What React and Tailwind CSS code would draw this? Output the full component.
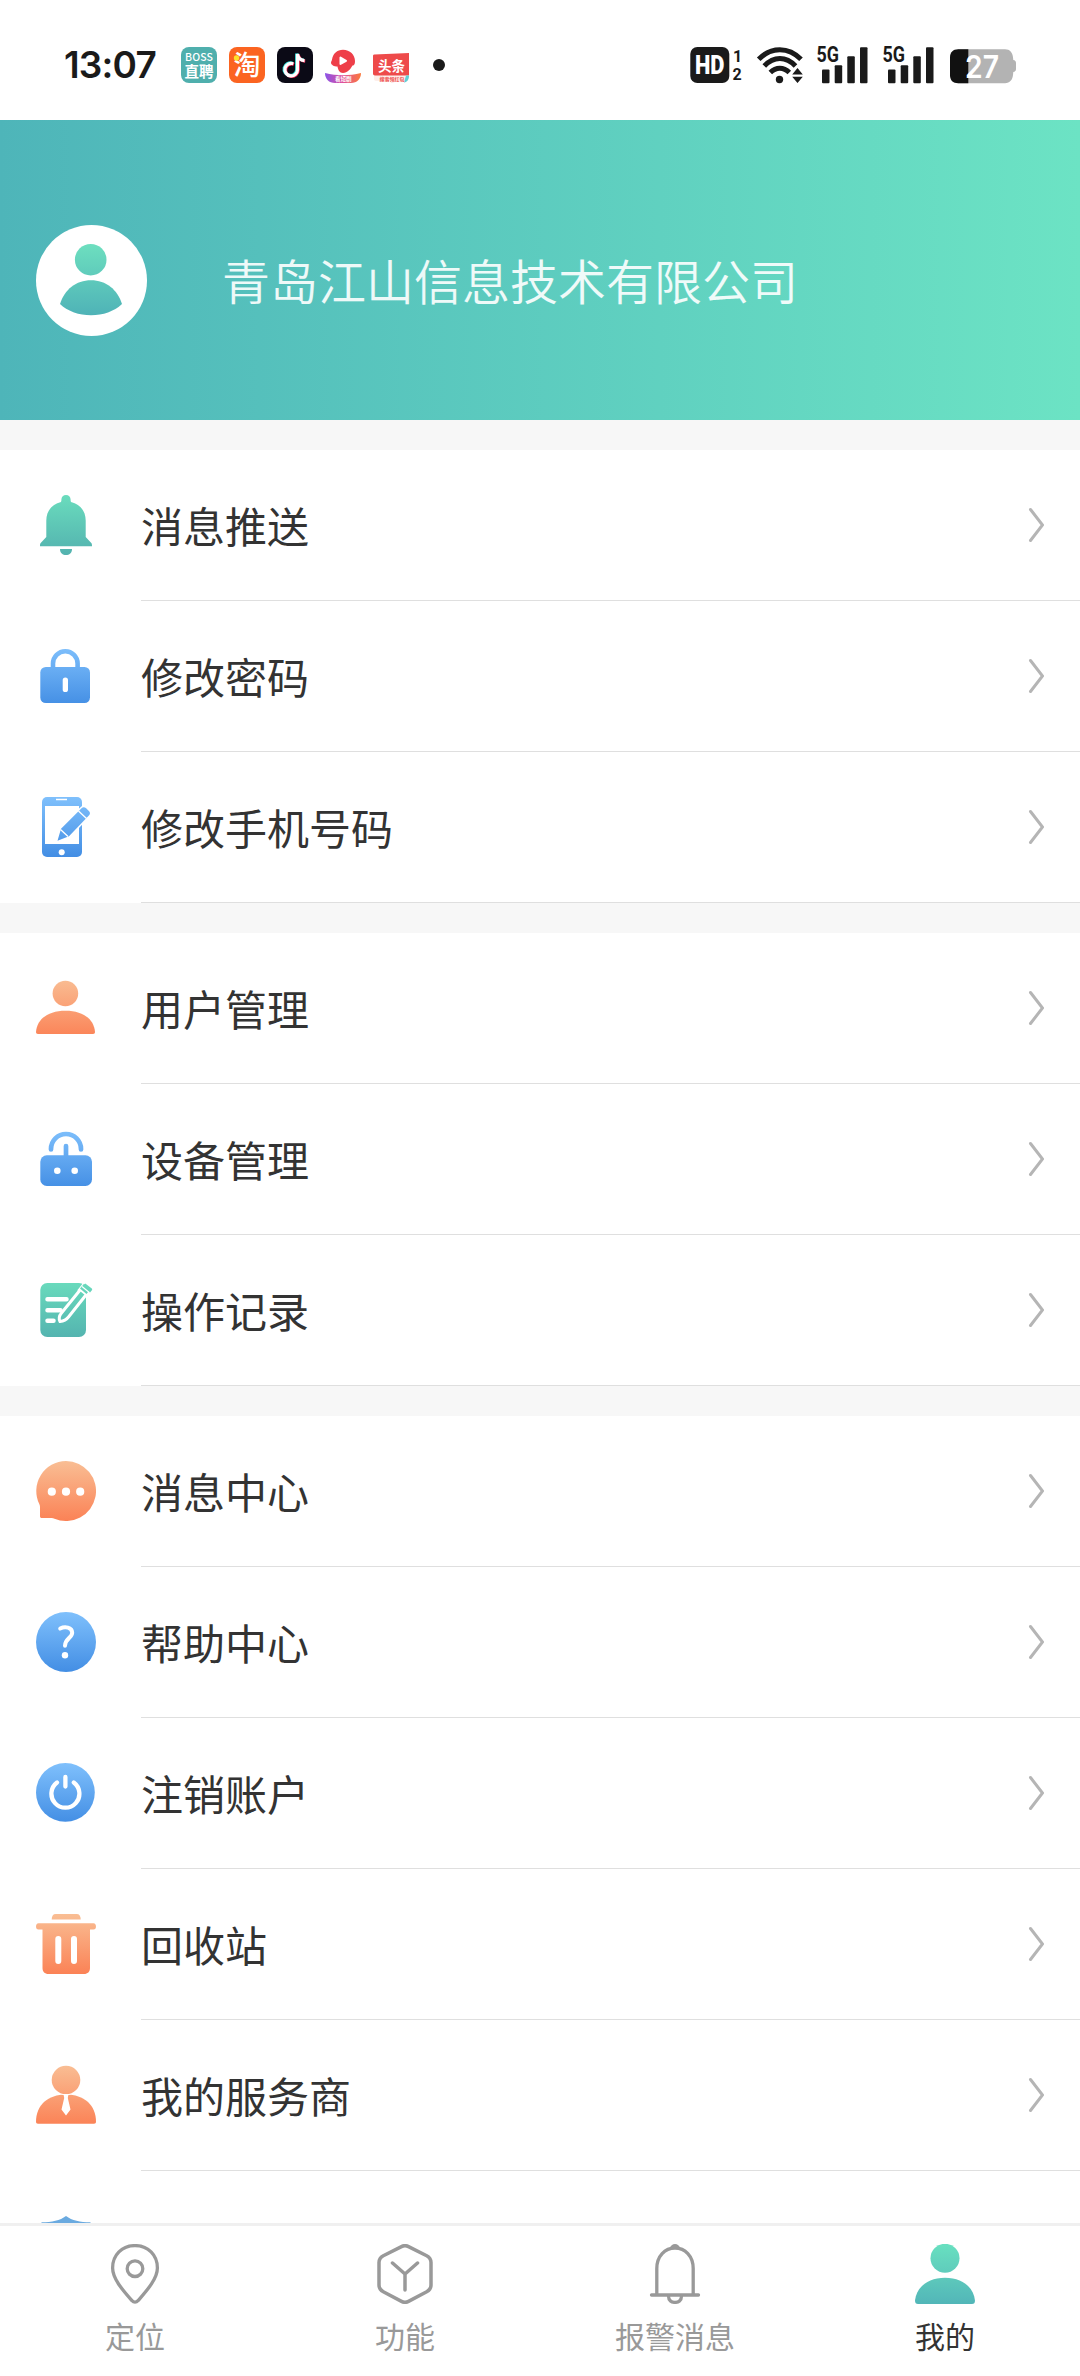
// App.jsx
import React from 'react';

// Shared vertical gradients for the filled icons
const GradientDefs = () => (
  <svg className="absolute h-0 w-0" aria-hidden="true">
    <defs>
      <linearGradient id="green" gradientUnits="userSpaceOnUse" x1="0" y1="0" x2="0" y2="60">
        <stop offset="0" stopColor="#6adcbd" />
        <stop offset="1" stopColor="#53b2af" />
      </linearGradient>
      <linearGradient id="blue" gradientUnits="userSpaceOnUse" x1="0" y1="0" x2="0" y2="60">
        <stop offset="0" stopColor="#7fc0fc" />
        <stop offset="1" stopColor="#438ee4" />
      </linearGradient>
      <linearGradient id="orange" gradientUnits="userSpaceOnUse" x1="0" y1="0" x2="0" y2="60">
        <stop offset="0" stopColor="#f9be94" />
        <stop offset="1" stopColor="#fb8256" />
      </linearGradient>
      <linearGradient id="teal" gradientUnits="userSpaceOnUse" x1="0" y1="0" x2="0" y2="60">
        <stop offset="0" stopColor="#68e0c0" />
        <stop offset="0.45" stopColor="#60cdbc" />
        <stop offset="1" stopColor="#52b6b8" />
      </linearGradient>
      <linearGradient id="avatar" gradientUnits="userSpaceOnUse" x1="0" y1="19" x2="0" y2="90">
        <stop offset="0" stopColor="#6ddfbf" />
        <stop offset="1" stopColor="#4fb3b7" />
      </linearGradient>
      <linearGradient id="app-ribbon" x1="0" y1="0" x2="1" y2="0">
        <stop offset="0" stopColor="#8a55e8" />
        <stop offset="0.5" stopColor="#e0509a" />
        <stop offset="1" stopColor="#fb7a3c" />
      </linearGradient>
    </defs>
  </svg>
);

const Icon = ({ children }) => (
  <svg viewBox="0 0 60 60" className="h-[60px] w-[60px] shrink-0" fill="none">
    {children}
  </svg>
);

const BellIcon = () => (
  <Icon>
    <path
      fill="url(#green)"
      d="M30 0c2.700 0 4.600 2 4.600 4.500 0 1 0 1.800.4 2.400C44 9 49.700 16 49.700 25.500V42l5.600 6c.6.700.7 1.500.7 3.300H4c0-1.800.1-2.600.7-3.300l5.600-6V25.500C10.300 16 16 9 25 6.900c.4-.6.400-1.400.4-2.400C25.400 2 27.300 0 30 0Z"
    />
    <path fill="url(#green)" d="M24 54h12c0 4-2.700 6-6 6s-6-2-6-6Z" />
  </Icon>
);

const LockIcon = () => (
  <Icon>
    <path stroke="url(#blue)" strokeWidth="4.600" d="M17 24v-6.500a12.300 12.300 0 0 1 24.600 0V24" />
    <rect x="4.300" y="21" width="49.700" height="36" rx="5.500" fill="url(#blue)" />
    <rect x="26.700" y="31.500" width="5.300" height="14.500" rx="2.600" fill="#fff" />
  </Icon>
);

const PhoneIcon = () => (
  <Icon>
    <rect x="6" y="0" width="40" height="60" rx="5" fill="url(#blue)" />
    <rect x="9" y="9" width="34" height="38" fill="#fff" />
    <path stroke="#fff" strokeWidth="1.500" d="M20 2.500h11" />
    <circle cx="25.700" cy="55.300" r="3" fill="#fff" />
    <path
      fill="url(#blue)"
      stroke="#fff"
      strokeWidth="3"
      paintOrder="stroke"
      d="M45.500 11.200c1.300-1.400 3-1.400 4.400-.1l3 2.800c1.400 1.300 1.400 3 .2 4.400L33 39.300l-11.500 4.500 3.500-12Z"
    />
    <path stroke="#fff" strokeWidth="1.300" d="m42.500 14 8 7.500M24.500 32.500l7.500 7" />
  </Icon>
);

const UserIcon = () => (
  <Icon>
    <circle cx="29.400" cy="15.500" r="12.800" fill="url(#orange)" />
    <path fill="url(#orange)" d="M2 56c-1.300 0-2-.7-2-2C1 41 12 32.700 29.500 32.700S58 41 59 54c0 1.300-.7 2-2 2Z" />
  </Icon>
);

const DeviceIcon = () => (
  <Icon>
    <path
      stroke="url(#blue)"
      strokeWidth="4.700"
      strokeLinecap="round"
      d="M15 20.500v-.5a15 15 0 0 1 30 0v.5M30 17v12"
    />
    <rect x="4.300" y="26.300" width="51.700" height="30.700" rx="6.500" fill="url(#blue)" />
    <circle cx="21.300" cy="41.700" r="3.300" fill="#fff" />
    <circle cx="38.700" cy="41.700" r="3.300" fill="#fff" />
  </Icon>
);

const RecordIcon = () => (
  <Icon>
    <rect x="4.300" y="3" width="45.700" height="54" rx="7" fill="url(#green)" />
    <path stroke="#fff" strokeWidth="4.500" strokeLinecap="round" d="M11.500 19.300h19M11.500 30.300h13M11.500 40.700h6" />
    <path stroke="#fff" strokeWidth="12" d="m46 14 8-10" />
    <path
      fill="url(#green)"
      stroke="#fff"
      strokeWidth="3"
      strokeLinejoin="round"
      d="M25.500 33 44.500 9.500l6 4.800L32.500 37c-2 2.500-4.500 4-8.500 4.500-1.500-3-.6-6 1.500-8.500Z"
    />
    <path fill="url(#green)" d="M44 8.500 48 3.700l6.500 5.200-4 5Z" />
    <path fill="url(#green)" d="m48.500 4.500.8-1 6.200 4.700c.9.800.8 1.500.2 2.300l-1.700 2.100-6.500-5.200Z" />
    <path stroke="#fff" strokeWidth="1.200" d="m46 6.500 7 5.700" />
  </Icon>
);

const MessageIcon = () => (
  <Icon>
    <path
      fill="url(#orange)"
      d="M30 0a30 30 0 1 1-11.500 57.700c-1-.5-1.800-.7-2.800-.7H6c-1.500 0-2-.6-2-2V46c0-1-.2-1.900-.7-2.900A30 30 0 0 1 30 0Z"
    />
    <circle cx="15.800" cy="30.700" r="4.100" fill="#fff" />
    <circle cx="30" cy="30.700" r="4.100" fill="#fff" />
    <circle cx="44.200" cy="30.700" r="4.100" fill="#fff" />
  </Icon>
);

const HelpIcon = () => (
  <Icon>
    <circle cx="30" cy="30" r="30" fill="url(#blue)" />
    <path
      stroke="#fff"
      strokeWidth="4"
      strokeLinecap="round"
      d="M24.200 16.500c4.500-2.300 12-1.500 12 4.200 0 5-7.200 6-7.200 13"
    />
    <circle cx="29" cy="43.300" r="3.200" fill="#fff" />
  </Icon>
);

const PowerIcon = () => (
  <Icon>
    <circle cx="29.400" cy="29.400" r="29.400" fill="url(#blue)" />
    <path
      stroke="#fff"
      strokeWidth="4.300"
      strokeLinecap="round"
      d="M21 19.500a14 14 0 1 0 16.800 0M29.400 14v9.500"
    />
  </Icon>
);

const TrashIcon = () => (
  <Icon>
    <path fill="url(#orange)" d="M15.700 5.600c0-3.600 1.300-5.600 4-5.600h21c2.700 0 4 2 4 5.600Z" />
    <path
      fill="url(#orange)"
      d="M2.500 9.300h55c3.300 0 3.300 6.200 0 6.200H54V54c0 3.700-2.300 6-6 6H12.500c-3.700 0-6-2.300-6-6V15.500h-4c-3.300 0-3.300-6.200 0-6.200Z"
    />
    <path stroke="#fff" strokeWidth="6" strokeLinecap="round" d="M22.300 25v22M38 25v22" />
  </Icon>
);

const ProviderIcon = () => (
  <Icon>
    <path fill="url(#orange)" d="M2 58.700c-1.300 0-2-.7-2-2C0 40 12 29.500 30 29.500S60 40 60 56.700c0 1.300-.7 2-2 2Z" />
    <circle cx="30" cy="15" r="15.300" fill="#fff" />
    <circle cx="30" cy="15" r="14.300" fill="url(#orange)" />
    <path fill="#fff" d="M27.500 29h5l-.7 4 2.700 11.500-4.500 6-4.500-6L28.200 33Z" />
  </Icon>
);

const ShieldIcon = () => (
  <Icon>
    <path
      fill="#6aaae0"
      d="M30 0c6 4.500 14 6.300 24.500 6.300V30c0 15-9 24-24.500 30C14.500 54 5.500 45 5.500 30V6.300C16 6.300 24 4.500 30 0Z"
    />
  </Icon>
);

const PinTabIcon = () => (
  <Icon>
    <g stroke="#999" strokeWidth="3.300" strokeLinejoin="round">
      <path d="M30 1.600c13 0 22.400 9.400 22.400 22.400 0 11-11 23-19.400 32.700-1.800 2-4.200 2-6 0C18.500 47 7.600 35 7.600 24 7.600 11 17 1.600 30 1.600Z" />
      <circle cx="30" cy="24.700" r="7.800" />
    </g>
  </Icon>
);

const FunctionTabIcon = () => (
  <Icon>
    <g stroke="#999" strokeWidth="3.500" strokeLinecap="round" strokeLinejoin="round">
      <path d="M26.500 2.600c2.300-1.200 4.700-1.200 7 0l18.200 9.100c3 1.600 4.300 3.700 4.300 6.800v22.500c0 3.100-1.300 5.200-4.300 6.800L33.500 57.400c-2.300 1.200-4.700 1.200-7 0L8.300 47.800C5.300 46.200 4 44.100 4 41V18.500c0-3.100 1.300-5.200 4.300-6.800Z" />
      <path d="M17.500 19 30 30l12.500-11M30 30v16" />
    </g>
  </Icon>
);

const BellTabIcon = () => (
  <Icon>
    <g stroke="#999" strokeWidth="3.300" strokeLinecap="round">
      <path d="M11.800 51V24.500C11.800 12 20 4 30 4s18.200 8 18.200 20.500V51M6.500 51h47" />
      <path d="M23.500 52c0 4.500 3 6.400 6.500 6.400s6.500-1.900 6.500-6.400" />
    </g>
    <path fill="#999" d="M24.500 5c1-3.500 3-5 5.500-5s4.500 1.500 5.500 5Z" />
  </Icon>
);

const MineTabIcon = () => (
  <Icon>
    <circle cx="30" cy="14.300" r="14.500" fill="url(#teal)" />
    <path fill="url(#teal)" d="M3 60c-2 0-3-1-3-3.500C1.500 43 13 33.700 30 33.700S58.500 43 60 56.500c0 2.500-1 3.500-3 3.500Z" />
  </Icon>
);

const menuGroups = [
  [
    { label: '消息推送', icon: BellIcon },
    { label: '修改密码', icon: LockIcon },
    { label: '修改手机号码', icon: PhoneIcon },
  ],
  [
    { label: '用户管理', icon: UserIcon },
    { label: '设备管理', icon: DeviceIcon },
    { label: '操作记录', icon: RecordIcon },
  ],
  [
    { label: '消息中心', icon: MessageIcon },
    { label: '帮助中心', icon: HelpIcon },
    { label: '注销账户', icon: PowerIcon },
    { label: '回收站', icon: TrashIcon },
    { label: '我的服务商', icon: ProviderIcon },
    { label: '', icon: ShieldIcon },
  ],
];

const tabs = [
  { label: '定位', icon: PinTabIcon },
  { label: '功能', icon: FunctionTabIcon },
  { label: '报警消息', icon: BellTabIcon },
  { label: '我的', icon: MineTabIcon, active: true },
];

const SignalIcon = () => (
  <svg viewBox="0 0 52 38" className="h-[38px] w-[52px] overflow-visible" fill="#1a1a1a">
    <text x="0.500" y="15.800" fontSize="22" fontWeight="700" fontFamily="Roboto, sans-serif" textLength="22.500" lengthAdjust="spacingAndGlyphs">
      5G
    </text>
    <rect x="6" y="23.500" width="7.500" height="13.700" rx="1" />
    <rect x="18.700" y="19.300" width="7.500" height="17.900" rx="1" />
    <rect x="31.300" y="10.300" width="7.500" height="26.900" rx="1" />
    <rect x="44" y="1.300" width="7.500" height="35.900" rx="1" />
  </svg>
);

const StatusBar = () => (
  <div className="flex h-[120px] shrink-0 items-center justify-between bg-white pt-[10px] pr-[64px] pl-[64px]">
    <div className="flex items-center">
      <span className="w-[117px] font-['Inter'] text-[37px] leading-[48px] font-semibold tracking-[-0.8px] text-[#1a1a1a]">13:07</span>
      <div className="flex items-center gap-3">
        <svg viewBox="0 0 36 36" className="h-9 w-9 overflow-visible">
          <rect width="36" height="36" rx="8" fill="#4fafad" />
          <g fill="#fff" fontFamily="Noto Sans CJK SC, sans-serif" fontWeight="700">
            <text x="4" y="14" fontSize="10.500" fontWeight="500" textLength="28">BOSS</text>
            <text x="3.500" y="29.500" fontSize="14.500">直聘</text>
          </g>
        </svg>
        <svg viewBox="0 0 36 36" className="h-9 w-9 overflow-visible">
          <rect width="36" height="36" rx="8" fill="#fb6421" />
          <text x="4.500" y="28" fontSize="27" fontWeight="500" fill="#fff" fontFamily="Noto Sans CJK SC, sans-serif">淘</text>
          <circle cx="7.500" cy="11" r="2.700" fill="#fde02a" />
        </svg>
        <svg viewBox="0 0 36 36" className="h-9 w-9">
          <rect width="36" height="36" rx="8" fill="#0b0a16" />
          <g fill="none" strokeWidth="3.200">
            <path stroke="#35e0dc" d="M15.500 16.200a6.300 6.300 0 1 0 4.200 6V6.500c.5 3.800 3 6.300 7 6.600" />
            <path stroke="#fb2c5a" d="M17 17.200a6.300 6.300 0 1 0 4.200 6V7.500c.5 3.800 3 6.300 7 6.600" />
            <path stroke="#fff" d="M16.300 16.700a6.300 6.300 0 1 0 4.200 6V7c.5 3.800 3 6.300 7 6.600" />
          </g>
        </svg>
        <svg viewBox="0 0 36 36" className="h-9 w-9 overflow-visible">
          <path fill="#ee3f49" d="M18 2.700c7 0 12 5 12 11.300 0 3-.8 4.700-2.500 4.500-2 3.500-5 7.500-9.500 7.500-3.500 0-5-3.500-5.500-6.500-3.500 0-6.500-1.500-6.500-4 0-1.300 1-1.800 1-3C8 6.500 12 2.700 18 2.700Z" />
          <path fill="#fff" stroke="#fff" strokeWidth="2" strokeLinejoin="round" d="M15.500 10.500v6.500l5.500-3.200Z" />
          <path fill="url(#app-ribbon)" d="M0 26c12 3 24 3 36 0 0 6-4 10-10 10H10C4 36 0 32 0 26Z" />
          <text x="10" y="34" fontSize="5.500" fontWeight="700" fill="#fff" fontFamily="Noto Sans CJK SC, sans-serif">看短剧</text>
        </svg>
        <svg viewBox="0 0 36 36" className="h-9 w-9 overflow-visible">
          <path fill="#fdeeea" d="M1 28h34v6H3c-1 0-2-1-2-2Z" />
          <path fill="#ee4a4a" d="M0 9c0-1 .5-1.500 1.500-1.500L36 6v22.500H2c-1.300 0-2-.7-2-2Z" />
          <path fill="#5fd0d6" d="M36 28.500c0 4-1.500 6.500-5 7l2-7Z" />
          <text x="5" y="24" fontSize="13.500" fontWeight="700" fill="#fff" fontFamily="Noto Sans CJK SC, sans-serif">头条</text>
          <text x="6.500" y="34.200" fontSize="5" fontWeight="700" fill="#ee4a4a" fontFamily="Noto Sans CJK SC, sans-serif">搜索领红包</text>
        </svg>
      </div>
      <span className="ml-6 h-3 w-3 rounded-full bg-[#1a1a1a]" />
    </div>
    <div className="flex items-center">
      <svg viewBox="0 0 52 38" className="h-[38px] w-[52px] overflow-visible" fill="#1a1a1a">
        <rect x="0.300" y="1" width="39" height="36" rx="7" />
        <text x="5" y="28" fontSize="25" fontWeight="900" fill="#fff" fontFamily="Roboto, sans-serif" textLength="29.500" lengthAdjust="spacingAndGlyphs">HD</text>
        <text x="43" y="15.800" fontSize="16" fontWeight="700" fontFamily="Roboto, sans-serif">1</text>
        <text x="42.500" y="34" fontSize="16" fontWeight="700" fontFamily="Roboto, sans-serif">2</text>
      </svg>
      <svg viewBox="0 0 46 38" className="ml-[15px] h-[38px] w-[46px] overflow-visible" fill="none" stroke="#1a1a1a" strokeWidth="5">
        <path d="M1.700 13.300c12.500-12.800 29.800-12.800 42.300 0M7.300 20c9.500-10 21.700-10 31.200 0M13.300 26.600c5.800-5.800 13.200-5.800 19 0" />
        <circle cx="22.500" cy="33.500" r="3.700" fill="#1a1a1a" stroke="none" />
        <path stroke="#fff" strokeWidth="2" fill="#1a1a1a" paintOrder="stroke" d="m40.500 22 5.300 6.500H35.200ZM40.500 37l5.300-6.300H35.200Z" />
      </svg>
      <div className="ml-[13px] flex gap-[14px]">
        <SignalIcon />
        <SignalIcon />
      </div>
      <svg viewBox="0 0 66 38" className="ml-4 h-[38px] w-[66px] overflow-visible">
        <path fill="#b3b3b3" d="M8 3.200h47c5 0 7.500 3.300 8 8l.3 2.800c1.700.2 2.700 1.200 2.700 3v6c0 1.800-1 2.800-2.700 3l-.3 3c-.5 4.700-3 8.200-8 8.200H8Z" />
        <path fill="#111" d="M18.300 3.200H8c-5 0-8 3-8 8v18c0 5 3 8 8 8h10.300Z" />
        <text x="15" y="31.500" fontSize="31" fontWeight="600" fill="#fff" fontFamily="Inter, sans-serif" textLength="34" lengthAdjust="spacingAndGlyphs">27</text>
      </svg>
    </div>
  </div>
);

const ProfileHeader = () => (
  <div className="flex h-[300px] shrink-0 items-center bg-linear-to-r from-[#4eb5b9] to-[#6ce3c4] pt-[21px] pl-9">
    <svg viewBox="0 0 111 111" className="h-[111px] w-[111px] shrink-0">
      <circle cx="55.500" cy="55.500" r="55.500" fill="#fff" />
      <circle cx="54.700" cy="34.700" r="15.800" fill="url(#avatar)" />
      <path fill="url(#avatar)" d="M24 79c4.500-14.500 16-23.800 31-23.800S81.500 64.500 86 79c-8 7.500-19 11.300-31 11.300S32 86.500 24 79Z" />
    </svg>
    <h1 className="mb-[3px] ml-[75px] text-[48px] leading-[60px] font-[350] text-white/90">青岛江山信息技术有限公司</h1>
  </div>
);

const MenuRow = ({ item }) => {
  const RowIcon = item.icon;
  return (
    <div className="flex shrink-0 bg-white pl-9">
      <div className="flex h-[150px] w-[105px] items-center">
        <RowIcon />
      </div>
      <div className="flex h-[151px] flex-1 items-center justify-between border-b border-[#dfdfdf] pr-9">
        <span className="text-[42px] leading-[60px] text-[#333]">{item.label}</span>
        <svg viewBox="0 0 16 36" className="h-9 w-4" fill="none" stroke="#b5b5b5" strokeWidth="3" strokeLinecap="round">
          <path d="m2.500 2.500 12 15.500-12 15.500" />
        </svg>
      </div>
    </div>
  );
};

const TabBar = () => (
  <nav className="grid h-[153px] shrink-0 grid-cols-4 border-t-[3px] border-[#f0f0f0] bg-white">
    {tabs.map((tab) => {
      const TabIcon = tab.icon;
      return (
        <div key={tab.label} className="flex flex-col items-center pt-[18px]">
          <TabIcon />
          <span className={tab.active ? 'mt-[10px] text-[30px] leading-[42px] text-[#333]' : 'mt-[10px] text-[30px] leading-[42px] text-[#999]'}>
            {tab.label}
          </span>
        </div>
      );
    })}
  </nav>
);

function App() {
  return (
    <div className="flex h-[2376px] w-[1080px] flex-col overflow-hidden bg-[#f7f7f7] font-['Noto_Sans_CJK_SC',sans-serif]">
      <GradientDefs />
      <StatusBar />
      <ProfileHeader />
      <main className="flex min-h-0 flex-1 flex-col gap-[30px] overflow-hidden pt-[30px]">
        {menuGroups.map((group, index) => (
          <section key={index} className="shrink-0">
            {group.map((item) => (
              <MenuRow key={item.label} item={item} />
            ))}
          </section>
        ))}
      </main>
      <TabBar />
    </div>
  );
}

export default App;
